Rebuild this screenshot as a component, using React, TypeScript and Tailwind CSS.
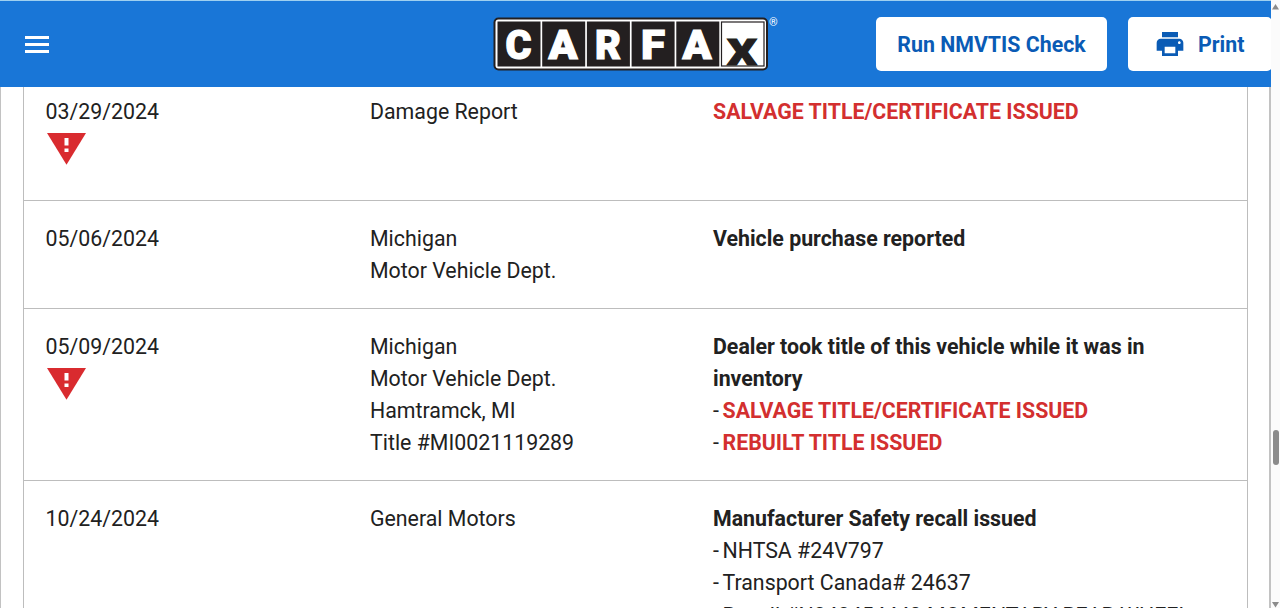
import type { ReactNode } from "react";

const letters = [
    { char: "C", x: 25.5, width: 26 },
    { char: "A", x: 70, width: 29 },
    { char: "R", x: 115, width: 26 },
    { char: "F", x: 160, width: 24 },
    { char: "A", x: 204, width: 29 },
]

function Logo() {
    return (
        <svg className="h-[54px] w-[286px] overflow-visible" viewBox="0 0 286 54">
            <rect x="0.5" y="0.5" width="274.5" height="53" rx="5" fill="#231f20" />
            <rect x="2.5" y="2.5" width="270.5" height="49" rx="3" fill="#fff" />
            {letters.map(({ char, x, width }, i) => (
                <g key={i}>
                    <rect x={4.5 + i * 44.7} y="4.5" width="43" height="45" fill="#231f20" />
                    <text
                        x={x}
                        y="41.5"
                        textAnchor="middle"
                        textLength={width}
                        lengthAdjust="spacingAndGlyphs"
                        fill="#fff"
                        stroke="#fff"
                        strokeWidth="1.2"
                        className="font-['Roboto',sans-serif] text-[40px] font-black"
                    >
                        {char}
                    </text>
                </g>
            ))}
            <rect x="228.5" y="5" width="42.5" height="44" fill="#fff" stroke="#231f20" strokeWidth="1.2" />
            <text
                x="249"
                y="48"
                textAnchor="middle"
                textLength="30"
                lengthAdjust="spacingAndGlyphs"
                fill="#231f20"
                stroke="#231f20"
                strokeWidth="1"
                className="font-['Roboto',sans-serif] text-[37px] font-black"
            >
                X
            </text>
            <text x="276" y="8.5" fill="#fff" className="font-['Roboto',sans-serif] text-[11px]">®</text>
        </svg>
    )
}

function PrintIcon() {
    return (
        <svg className="h-8 w-8" viewBox="0 0 24 24" fill="currentColor">
            <path d="M19 8H5c-1.66 0-3 1.34-3 3v6h4v4h12v-4h4v-6c0-1.66-1.34-3-3-3zm-3 11H8v-5h8v5zm3-7c-.55 0-1-.45-1-1s.45-1 1-1 1 .45 1 1-.45 1-1 1zm-1-9H6v4h12V3z" />
        </svg>
    )
}

function Alert() {
    return (
        <svg className="mt-[5px] ml-[1.5px] h-8 w-10" viewBox="0 0 40 32">
            <path d="M0 0h39L19.5 31.8z" fill="#d92b2f" />
            <path d="M17.5 5h4v7.5h-4zM17.5 15.5h4v3.5h-4z" fill="#fff" />
        </svg>
    )
}

function Row({ date, alert, source, children }: { date: string; alert?: boolean; source: string[]; children: ReactNode }) {
    return (
        <div className="flex border-b border-[#bdbdbd] pt-[22px] pb-[21px] pl-[21.5px]">
            <div className="w-[324.5px] shrink-0">
                <p>{date}</p>
                {alert && <Alert />}
            </div>
            <div className="w-[343px] shrink-0">
                {source.map((line) => (
                    <p key={line}>{line}</p>
                ))}
            </div>
            <div className="w-[500px]">{children}</div>
        </div>
    )
}

function Item({ danger, children }: { danger?: boolean; children: ReactNode }) {
    return (
        <div className="flex">
            <span className="w-[9.5px] shrink-0">-</span>
            <p className={danger ? "font-bold text-[#d32f2f]" : "whitespace-nowrap"}>{children}</p>
        </div>
    )
}

export default function App() {
    return (
        <div className="flex h-[608px] w-[1280px] overflow-hidden bg-white font-['Roboto',sans-serif] text-[21.33px] leading-8 text-[#212121]">
            <div className="flex w-[1271px] shrink-0 flex-col">
                <header className="flex h-[87px] shrink-0 items-center overflow-hidden border-t border-[#9fd0f0] bg-[#1976d7] pb-px">
                    <button className="ml-[25px] flex w-6 shrink-0 flex-col gap-1 pt-px">
                        <span className="h-[3px] bg-white" />
                        <span className="h-[3px] bg-white" />
                        <span className="h-[3px] bg-white" />
                    </button>
                    <div className="ml-[444px] shrink-0">
                        <Logo />
                    </div>
                    <button className="ml-[97px] h-[54px] w-[231px] shrink-0 rounded-[5px] bg-white pt-0.5 font-bold text-[#0a5bb5]">
                        Run NMVTIS Check
                    </button>
                    <button className="ml-[21px] flex h-[54px] w-[144px] shrink-0 items-center rounded-[5px] bg-white pl-[26px] font-bold text-[#0a5bb5]">
                        <PrintIcon />
                        <span className="ml-3 pt-0.5">Print</span>
                    </button>
                </header>
                <main className="flex min-h-0 flex-1 overflow-hidden border-x border-r-2 border-[#c2c2c2] pr-[21px] pl-[22px]">
                    <div className="-mt-[13px] h-[800px] w-full border-x border-[#bdbdbd]">
                        <div className="h-[127px]">
                            <Row date="03/29/2024" alert source={["Damage Report"]}>
                                <p className="mb-[51px] font-bold text-[#d32f2f]">SALVAGE TITLE/CERTIFICATE ISSUED</p>
                            </Row>
                        </div>
                        <Row date="05/06/2024" source={["Michigan", "Motor Vehicle Dept."]}>
                            <p className="font-bold">Vehicle purchase reported</p>
                        </Row>
                        <Row
                            date="05/09/2024"
                            alert
                            source={["Michigan", "Motor Vehicle Dept.", "Hamtramck, MI", "Title #MI0021119289"]}
                        >
                            <p className="font-bold">Dealer took title of this vehicle while it was in inventory</p>
                            <Item danger>SALVAGE TITLE/CERTIFICATE ISSUED</Item>
                            <Item danger>REBUILT TITLE ISSUED</Item>
                        </Row>
                        <Row date="10/24/2024" source={["General Motors"]}>
                            <p className="font-bold">Manufacturer Safety recall issued</p>
                            <Item>NHTSA #24V797</Item>
                            <Item>Transport Canada# 24637</Item>
                            <div className="pt-px">
                                <Item>Recall #N242454440 MOMENTARY REAR WHEEL</Item>
                            </div>
                        </Row>
                    </div>
                </main>
            </div>
            <div className="flex flex-1 flex-col items-center bg-[#fbfbfb] pt-1">
                <svg className="h-[6px] w-[7px]" viewBox="0 0 7 6"><path d="M3.5 0L7 5.5H0z" fill="#8b8b8b" /></svg>
                <div className="mt-[420px] h-[35px] w-[6px] rounded-full bg-[#8b8b8b]" />
                <svg className="mt-auto h-[6px] w-[7px]" viewBox="0 0 7 6"><path d="M0 0h7L3.5 5.5z" fill="#8b8b8b" /></svg>
            </div>
        </div>
    )
}
